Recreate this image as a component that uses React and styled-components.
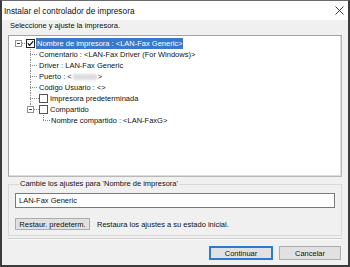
import React from 'react'
import styled, { createGlobalStyle } from 'styled-components'

const Global = createGlobalStyle`
  body {
    margin: 0;
    background: #ffffff;
    font-family: "Liberation Sans", Arial, sans-serif;
    font-size: 7.5px;
    color: #111;
  }
`

const Window = styled.div`
  width: 350px;
  height: 267px;
  box-sizing: border-box;
  border: 2px solid #3c3c3c;
  border-top: 1px solid #6a6a6a;
  display: flex;
  flex-direction: column;
  background: #f0f0f0;
`

const TitleBar = styled.div`
  height: 19px;
  flex: none;
  background: #fff;
  display: flex;
  align-items: center;
  justify-content: space-between;
  padding: 0 4px 0 2px;
  font-size: 8.3px;
`

const Body = styled.div`
  flex: 1;
  display: flex;
  flex-direction: column;
  padding: 0 6px;
`

const Caption = styled.div`
  line-height: 10px;
  height: 10px;
  margin: 1px 0 0 2px;
`

const TreeBox = styled.div`
  margin-top: 4px;
  height: 142px;
  box-sizing: border-box;
  background: #fff;
  border: 1px solid #a3a3a3;
  border-right-color: #b9b9b9;
  border-bottom-color: #b9b9b9;
  box-shadow: inset -1px -1px 0 #dcdcdc;
  padding-top: 2px;
`

const Row = styled.div`
  display: flex;
  align-items: center;
  height: 11px;
  white-space: nowrap;
`

const Spacer = styled.span`
  flex: none;
  width: ${p => p.$w}px;
`

const dots = dir => `repeating-linear-gradient(${dir}, #8a8a8a 0 1px, transparent 1px 2px)`

const Rail = styled.span`
  flex: none;
  width: ${p => p.$w}px;
  height: 11px;
  background-image: ${p => (p.$v ? dots('to bottom') + ', ' : '') + dots('to right')};
  background-size: ${p => (p.$v === 'full' ? '1px 11px, ' : p.$v === 'top' ? '1px 6px, ' : '') + '100% 1px'};
  background-position: ${p => (p.$v ? '0 0, ' : '') + '0 5px'};
  background-repeat: no-repeat;
`

const ExpanderCell = styled.span`
  flex: none;
  width: 7px;
  height: 11px;
  display: flex;
  align-items: center;
  background-image: ${p => (p.$up ? dots('to bottom') : 'none')};
  background-size: 1px 2px;
  background-position: 3px 0;
  background-repeat: no-repeat;
`

const Expander = styled.span`
  width: 7px;
  height: 7px;
  box-sizing: border-box;
  border: 1px solid #939393;
  background: #fff;
  display: flex;
  align-items: center;
  justify-content: center;
  &::after {
    content: '';
    width: 3px;
    height: 1px;
    background: #444;
  }
`

const Check = styled.span`
  flex: none;
  width: 9px;
  height: 9px;
  box-sizing: border-box;
  border: 1px solid ${p => (p.$checked ? '#222' : '#555')};
  background: #fff;
  display: flex;
  align-items: center;
  justify-content: center;
`

const Label = styled.span`
  margin-left: ${p => p.$ml || 0}px;
  padding: 0 1px;
  line-height: 11px;
  height: 11px;
  background: ${p => (p.$selected ? '#3a78cc' : 'transparent')};
  color: ${p => (p.$selected ? '#fff' : '#111')};
`

const Redacted = styled.span`
  display: inline-block;
  width: 24px;
  height: 6px;
  margin: 0 1px;
  vertical-align: middle;
  background: #dcdcdc;
  filter: blur(1px);
`

const Group = styled.fieldset`
  margin: 2px 0 0;
  padding: 4px 6px 5px;
  border: 1px solid #d9d9d9;
  min-width: 0;
`

const Legend = styled.legend`
  margin-left: 4px;
  padding: 0 1px;
  line-height: 10px;
`

const TextInput = styled.div`
  height: 15px;
  box-sizing: border-box;
  border: 1px solid #7a7a7a;
  background: #fff;
  padding-left: 3px;
  display: flex;
  align-items: center;
`

const ResetRow = styled.div`
  margin-top: 10px;
  display: flex;
  align-items: center;
  gap: 7px;
  white-space: nowrap;
`

const Button = styled.div`
  height: ${p => p.$h || 14}px;
  width: ${p => p.$w}px;
  box-sizing: border-box;
  background: #e1e1e1;
  border: 1px solid ${p => (p.$primary ? '#2a7ad6' : '#adadad')};
  box-shadow: ${p => (p.$primary ? 'inset 0 0 0 1px #2a7ad6' : 'none')};
  display: flex;
  align-items: center;
  justify-content: center;
  white-space: nowrap;
`

const Separator = styled.div`
  margin-top: 2px;
  height: 1px;
  background: #d0d0d0;
  border-bottom: 1px solid #fafafa;
`

const Footer = styled.div`
  margin-top: 6px;
  padding-right: 1px;
  display: flex;
  justify-content: flex-end;
  gap: 6px;
`

const CheckMark = () => (
  <svg width="7" height="7" viewBox="0 0 7 7">
    <path d="M0.8 3.4 L2.7 5.3 L6.2 1.2" fill="none" stroke="#111" strokeWidth="1.3" />
  </svg>
)

const CloseIcon = () => (
  <svg width="9" height="9" viewBox="0 0 9 9">
    <path d="M0.5 0.5 L8.5 8.5 M8.5 0.5 L0.5 8.5" stroke="#222" strokeWidth="0.9" />
  </svg>
)

const App = () => (
  <>
    <Global />
    <Window>
      <TitleBar>
        <span>Instalar el controlador de impresora</span>
        <CloseIcon />
      </TitleBar>
      <Body>
        <Caption>Seleccione y ajuste la impresora.</Caption>
        <TreeBox>
          <Row>
            <Spacer $w={6} />
            <ExpanderCell><Expander /></ExpanderCell>
            <Rail $w={4} />
            <Check $checked><CheckMark /></Check>
            <Label $selected $ml={1}>Nombre de impresora : &lt;LAN-Fax Generic&gt;</Label>
          </Row>
          <Row>
            <Spacer $w={21} />
            <Rail $w={8} $v="full" />
            <Label>Comentario : &lt;LAN-Fax Driver (For Windows)&gt;</Label>
          </Row>
          <Row>
            <Spacer $w={21} />
            <Rail $w={8} $v="full" />
            <Label>Driver : LAN-Fax Generic</Label>
          </Row>
          <Row>
            <Spacer $w={21} />
            <Rail $w={8} $v="full" />
            <Label>Puerto : &lt;<Redacted />&gt;</Label>
          </Row>
          <Row>
            <Spacer $w={21} />
            <Rail $w={8} $v="full" />
            <Label>Código Usuario : &lt;&gt;</Label>
          </Row>
          <Row>
            <Spacer $w={21} />
            <Rail $w={9} $v="full" />
            <Check />
            <Label $ml={1}>Impresora predeterminada</Label>
          </Row>
          <Row>
            <Spacer $w={18} />
            <ExpanderCell $up><Expander /></ExpanderCell>
            <Rail $w={5} />
            <Check />
            <Label $ml={1}>Compartido</Label>
          </Row>
          <Row>
            <Spacer $w={34} />
            <Rail $w={7} $v="top" />
            <Label>Nombre compartido : &lt;LAN-FaxG&gt;</Label>
          </Row>
        </TreeBox>
        <Group>
          <Legend>Cambie los ajustes para 'Nombre de impresora'</Legend>
          <TextInput>LAN-Fax Generic</TextInput>
          <ResetRow>
            <Button $w={75} $h={12}>Restaur. predeterm.</Button>
            <span>Restaura los ajustes a su estado inicial.</span>
          </ResetRow>
        </Group>
        <Separator />
        <Footer>
          <Button $w={64} $primary>Continuar</Button>
          <Button $w={62}>Cancelar</Button>
        </Footer>
      </Body>
    </Window>
  </>
)

export default App
